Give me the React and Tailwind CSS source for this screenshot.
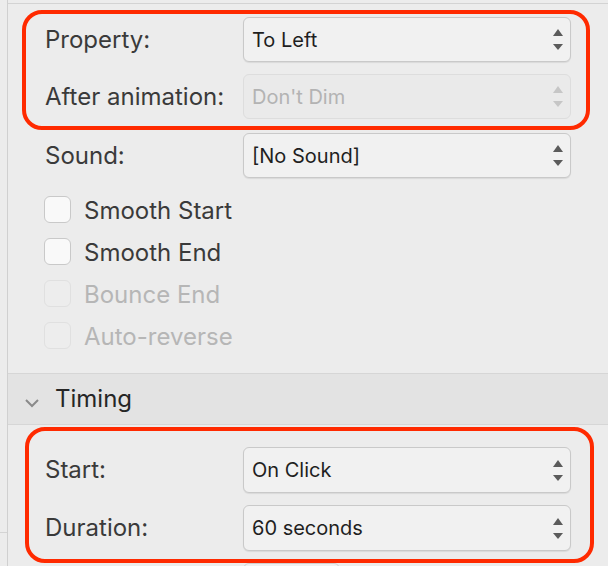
import React from 'react';

const font = { fontFamily: 'Inter, "Noto Sans", sans-serif' };

const Arrows = ({ disabled }) => (
  <svg width="10" height="21" viewBox="0 0 10 21" className="shrink-0">
    <polygon points="0,7 5,0 10,7" fill={disabled ? '#c6c6c6' : '#5b5b5b'} />
    <polygon points="0,15 10,15 5,21" fill={disabled ? '#c6c6c6' : '#5b5b5b'} />
  </svg>
);

const Select = ({ value, disabled, tall }) => (
  <div
    className={`flex-1 flex items-center justify-between pl-[8px] pr-[7px] rounded-[6px] border ${
      tall ? 'h-[46px]' : 'h-[45px]'
    } ${
      disabled
        ? 'bg-[#eaeaea] border-[#dddddd] text-[#b3b3b3]'
        : 'bg-[#f1f1f1] border-[#c9c9c9] text-[#1f1f1f] shadow-[0_1px_1px_rgba(0,0,0,0.08)]'
    } text-[20px]`}
  >
    <span>{value}</span>
    <Arrows disabled={disabled} />
  </div>
);

const Row = ({ label, value, disabled, tall }) => (
  <div className="flex items-center pl-[37px] pr-[37px]">
    <div className="w-[198px] text-[24px] text-[#3a3a3a]">{label}</div>
    <Select value={value} disabled={disabled} tall={tall} />
  </div>
);

const Check = ({ label, disabled }) => (
  <div className="flex items-center h-[27px] pl-[36px]">
    <div
      className={`w-[27px] h-[27px] rounded-[6px] border ${
        disabled ? 'bg-[#ededed] border-[#e0e0e0]' : 'bg-[#f9f9f9] border-[#c9c9c9]'
      }`}
    />
    <span className={`ml-[13px] mt-[3px] text-[24px] ${disabled ? 'text-[#b6b6b6]' : 'text-[#3a3a3a]'}`}>
      {label}
    </span>
  </div>
);

export default function App() {
  return (
    <div className="w-[608px] h-[566px] bg-[#ececec] overflow-hidden flex" style={font}>
      <div className="w-[7px] shrink-0 flex flex-col">
        <div className="h-[533px] border-b border-[#d4d4d4]" />
      </div>
      <div className="flex-1 border-l border-[#d0d0d0]">
        <div className="mt-[3px] border-t border-[#d3d3d3] pt-[13px]">
          <div className="relative flex flex-col gap-[12px]">
            <Row label="Property:" value="To Left" />
            <Row label="After animation:" value="Don't Dim" disabled />
            <div className="absolute left-[14px] right-[18px] top-[-7px] bottom-[-11px] border-4 border-[#ff2a00] rounded-[20px] pointer-events-none" />
          </div>
          <div className="mt-[14px]">
            <Row label="Sound:" value="[No Sound]" />
          </div>
          <div className="mt-[18px] flex flex-col gap-[15px]">
            <Check label="Smooth Start" />
            <Check label="Smooth End" />
            <Check label="Bounce End" disabled />
            <Check label="Auto-reverse" disabled />
          </div>
        </div>
        <div className="mt-[24px] border-t border-b border-[#d6d6d6] bg-[#e3e3e3] h-[52px] flex items-center">
          <svg width="16" height="10" viewBox="0 0 16 10" className="ml-[16px] mt-[8px]">
            <polyline points="2,2 8,8 14,2" fill="none" stroke="#8a8a8a" strokeWidth="2" />
          </svg>
          <span className="ml-[15px] text-[24px] text-[#262626]">Timing</span>
        </div>
        <div className="pt-[22px]">
          <div className="relative flex flex-col gap-[12px]">
            <Row label="Start:" value="On Click" tall />
            <Row label="Duration:" value="60 seconds" tall />
            <div className="absolute left-[17px] right-[14px] top-[-20px] bottom-[-12px] border-4 border-[#ff2a00] rounded-[20px] pointer-events-none" />
          </div>
          <div className="mt-[12px] ml-[235px] w-[97px] h-[20px] rounded-t-[6px] border border-[#d0d0d0] bg-[#f0f0f0]" />
        </div>
      </div>
    </div>
  );
}
